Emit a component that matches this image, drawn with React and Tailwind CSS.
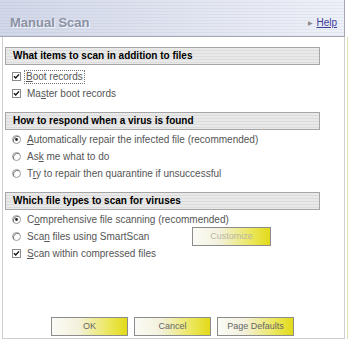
import React from 'react';

const U = ({ children }) => <span className="underline">{children}</span>;

const CheckBox = () => (
    <svg width="9" height="9" viewBox="0 0 9 9" className="shrink-0">
        <rect x="0.5" y="0.5" width="8" height="8" fill="#fff" stroke="#8a8a8a" />
        <path d="M2 4.2 L3.7 6 L7 2.4" fill="none" stroke="#111" strokeWidth="1.4" />
    </svg>
);

const Radio = ({ checked }) => (
    <svg width="9" height="9" viewBox="0 0 9 9" className="shrink-0">
        <circle cx="4.5" cy="4.5" r="4" fill="#fff" stroke="#9a9a9a" />
        <path d="M1.7 6.8 A4 4 0 0 1 6.8 1.7" fill="none" stroke="#707070" />
        {checked && <circle cx="4.5" cy="4.5" r="1.4" fill="#222" />}
    </svg>
);

const SectionHeader = ({ children }) => (
    <div className="ml-[2px] w-[315px] h-[18px] flex items-center pl-[7px] border border-[#a6a6a6] bg-[repeating-linear-gradient(to_bottom,#e9e9e9_0px,#e9e9e9_2px,#dcdcdc_2px,#dcdcdc_3px)] text-[10px] font-bold text-black leading-none">
        {children}
    </div>
);

const Row = ({ control, children, focus }) => (
    <div className="h-[17px] flex items-center pl-[9px] gap-[6px] text-[10px] text-[#555] leading-none">
        {control}
        <span className={focus ? 'outline outline-1 outline-dotted outline-[#777] px-[1px] py-[1px] -ml-[2px]' : ''}>{children}</span>
    </div>
);

const YellowButton = ({ children, disabled, className = '' }) => (
    <button
        className={`h-[19px] border border-[#8c8c8c] bg-[linear-gradient(to_right,#fbfbf6_0%,#f3f1dc_35%,#ece75e_75%,#e2da18_100%)] text-[9px] leading-none ${disabled ? 'text-[#b8b6a0]' : 'text-[#666]'} ${className}`}
    >
        {children}
    </button>
);

const App = () => {
    return (
        <div className="w-[350px] h-[340px] bg-white flex font-['Liberation_Sans',Arial,sans-serif] overflow-hidden">
            <div className="w-[345px] h-[339px] flex flex-col">
                {/* Title bar */}
                <div className="h-[37px] shrink-0 flex justify-between items-start pt-[15px] pl-[10px] pr-[7px] border-b border-r border-[#a4a7b2] bg-[linear-gradient(to_right,rgba(186,194,218,0.45),rgba(255,255,255,0.35)),repeating-linear-gradient(to_bottom,#e6e9f4_0px,#e6e9f4_2px,#d5daea_2px,#d5daea_3px)]">
                    <span className="text-[13px] leading-[16px] font-bold text-[#8a92a4] [text-shadow:1px_1px_0_#f4f5fa]">Manual Scan</span>
                    <span className="flex items-center gap-[3px] text-[10px] leading-[16px]">
                        <span className="text-[6px] text-[#888]">&#9654;</span>
                        <span className="underline text-[#3d3d9a]">Help</span>
                    </span>
                </div>

                {/* Body */}
                <div className="flex-1 flex flex-col ml-[2px] border-l border-r border-b border-[#cfcfcf]">
                    <div className="mt-[10px]">
                        <SectionHeader>What items to scan in addition to files</SectionHeader>
                        <div className="pt-[3px]">
                            <Row control={<CheckBox />} focus>
                                <U>B</U>oot records
                            </Row>
                            <Row control={<CheckBox />}>
                                Ma<U>s</U>ter boot records
                            </Row>
                        </div>
                    </div>

                    <div className="mt-[10px]">
                        <SectionHeader>How to respond when a virus is found</SectionHeader>
                        <div className="pt-[1px]">
                            <Row control={<Radio checked />}>
                                <U>A</U>utomatically repair the infected file (recommended)
                            </Row>
                            <Row control={<Radio />}>
                                As<U>k</U> me what to do
                            </Row>
                            <Row control={<Radio />}>
                                T<U>r</U>y to repair then quarantine if unsuccessful
                            </Row>
                        </div>
                    </div>

                    <div className="mt-[10px]">
                        <SectionHeader>Which file types to scan for viruses</SectionHeader>
                        <div className="pt-[1px]">
                            <Row control={<Radio checked />}>
                                C<U>o</U>mprehensive file scanning (recommended)
                            </Row>
                            <div className="h-[17px] flex items-center pl-[9px] gap-[6px] text-[10px] text-[#555] leading-none">
                                <Radio />
                                <span className="w-[159px]">
                                    Sca<U>n</U> files using SmartScan
                                </span>
                                <YellowButton disabled className="w-[79px]">Customize</YellowButton>
                            </div>
                            <Row control={<CheckBox />}>
                                <U>S</U>can within compressed files
                            </Row>
                        </div>
                    </div>

                    <div className="flex-1" />

                    <div className="flex justify-center gap-[6px] pb-[2px] pr-[2px]">
                        <YellowButton className="w-[77px]">OK</YellowButton>
                        <YellowButton className="w-[77px]">Cancel</YellowButton>
                        <YellowButton className="w-[77px]">Page Defaults</YellowButton>
                    </div>
                </div>
            </div>
            <div className="mt-[37px] ml-[2px] w-px h-[302px] bg-[#dfe2b4]" />
        </div>
    );
};

export default App;
